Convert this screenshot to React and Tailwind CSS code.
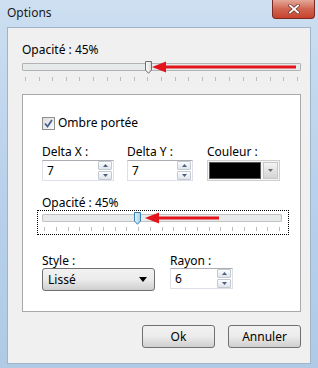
import React from "react";

function Ticks({ count = 21, className = "" }) {
  return (
    <div className={"flex justify-between " + className}>
      {Array.from({ length: count }).map((_, i) => (
        <span key={i} className="w-px h-[4px] bg-[#bcbcbc]" />
      ))}
    </div>
  );
}

function Thumb({ blue }) {
  return (
    <svg width="9" height="13" viewBox="0 0 9 13">
      <defs>
        <linearGradient id={blue ? "tb" : "tg"} x1="0" y1="0" x2="1" y2="0">
          <stop offset="0" stopColor={blue ? "#e3f3fb" : "#ffffff"} />
          <stop offset="1" stopColor={blue ? "#9fd2ee" : "#d9d9d9"} />
        </linearGradient>
      </defs>
      <path
        d="M1.5 0.5 H7.5 V9 L4.5 12.3 L1.5 9 Z"
        fill={`url(#${blue ? "tb" : "tg"})`}
        stroke={blue ? "#3c7fb1" : "#707070"}
        strokeWidth="1"
      />
    </svg>
  );
}

function Arrow({ width }) {
  return (
    <svg width={width} height="12" viewBox={`0 0 ${width} 12`}>
      <path d="M0 6 L14 0.5 L14 11.5 Z" fill="#e3141b" />
      <rect x="13" y="4.5" width={width - 13} height="3" fill="#e3141b" />
    </svg>
  );
}

function SpinBox({ value, w }) {
  return (
    <div
      className="h-[21px] flex items-center bg-white border border-[#dde1e7] border-t-[#abadb3]"
      style={{ width: w }}
    >
      <span className="pl-[4px] flex-1 leading-none">{value}</span>
      <div className="flex flex-col gap-px mr-px">
        <div className="w-[14px] h-[9px] border border-[#c3c9d1] rounded-[1px] bg-gradient-to-b from-[#fbfcfd] to-[#dfe5ec] flex items-center justify-center">
          <svg width="5" height="3" viewBox="0 0 5 3">
            <path d="M0 3 L2.5 0 L5 3 Z" fill="#4e5e7c" />
          </svg>
        </div>
        <div className="w-[14px] h-[9px] border border-[#c3c9d1] rounded-[1px] bg-gradient-to-b from-[#fbfcfd] to-[#dfe5ec] flex items-center justify-center">
          <svg width="5" height="3" viewBox="0 0 5 3">
            <path d="M0 0 L2.5 3 L5 0 Z" fill="#4e5e7c" />
          </svg>
        </div>
      </div>
    </div>
  );
}

function Button({ children }) {
  return (
    <button className="w-[73px] h-[23px] rounded-[3px] border border-[#707070] bg-gradient-to-b from-[#f2f2f2] via-[#ebebeb] to-[#cfcfcf] leading-none">
      {children}
    </button>
  );
}

export default function App() {
  return (
    <div className="w-[318px] h-[368px] overflow-hidden flex flex-col bg-gradient-to-b from-[#cddff1] via-[#b9d1ea] to-[#b0cae6] font-['Noto_Sans',sans-serif] text-[12px] text-black">
      {/* title bar */}
      <div className="h-[27px] shrink-0 flex items-start">
        <div className="pl-[7px] pt-[5px] leading-[16px] text-[#1a1a1a]">Options</div>
        <div className="ml-auto mr-[3px] w-[43px] h-[19px] rounded-b-[4px] border border-t-0 border-[#7b2a22] bg-gradient-to-b from-[#e3a898] via-[#d06552] to-[#c8412c] flex items-center justify-center">
          <svg width="12" height="10" viewBox="0 0 12 10">
            <path
              d="M2 1.5 L10 8.5 M10 1.5 L2 8.5"
              stroke="#7a3a32"
              strokeWidth="3.4"
              strokeLinecap="square"
            />
            <path
              d="M2 1.5 L10 8.5 M10 1.5 L2 8.5"
              stroke="#ffffff"
              strokeWidth="1.8"
              strokeLinecap="square"
            />
          </svg>
        </div>
      </div>

      {/* client */}
      <div className="mx-[7px] mb-[4px] flex-1 bg-[#f0f0f0] border border-[#9fb3c9] pl-[14px] pr-[9px] flex flex-col">
        <div className="mt-[14px] leading-[16px]">Opacité : 45%</div>
        <div className="relative mt-[5px]">
          <div className="h-[8px] rounded-[1px] border border-[#b3b3b3] bg-[#e7eaea]" />
          <div className="absolute left-[122px] top-[-2px]">
            <Thumb />
          </div>
          <div className="absolute left-[130px] top-[-2px]">
            <Arrow width={144} />
          </div>
        </div>
        <Ticks className="mt-[6px] px-[3px]" />

        {/* group box */}
        <div className="mt-[13px] h-[218px] bg-white border border-[#a9a9a9] pl-[19px] flex flex-col">
          <div className="mt-[20px] flex items-center gap-[3px] leading-[16px]">
            <div className="w-[13px] h-[13px] border border-[#8e8f8f] bg-gradient-to-br from-[#dcdcdc] to-[#fbfbfb] flex items-center justify-center">
              <svg width="9" height="9" viewBox="0 0 9 9">
                <path
                  d="M1 4.5 L3.5 7.5 L8 1"
                  fill="none"
                  stroke="#4a5f97"
                  strokeWidth="1.8"
                />
              </svg>
            </div>
            <span>Ombre portée</span>
          </div>

          <div className="mt-[13px] flex">
            <div className="w-[85px]">
              <div className="leading-[16px]">Delta X :</div>
              <SpinBox value="7" w={72} />
            </div>
            <div className="w-[80px]">
              <div className="leading-[16px]">Delta Y :</div>
              <SpinBox value="7" w={66} />
            </div>
            <div>
              <div className="leading-[16px]">Couleur :</div>
              <div className="w-[73px] h-[21px] border border-[#cfcfcf] bg-[#f4f4f4] flex items-center p-px gap-[2px]">
                <div className="flex-1 h-full bg-black border border-[#555]" />
                <div className="w-[15px] h-full border border-[#c7c7c7] bg-gradient-to-b from-[#f3f3f3] to-[#d4d4d4] flex items-center justify-center">
                  <svg width="5" height="3" viewBox="0 0 5 3">
                    <path d="M0 0 L2.5 3 L5 0 Z" fill="#6d6d6d" />
                  </svg>
                </div>
              </div>
            </div>
          </div>

          <div className="mt-[14px] leading-[15px]">Opacité : 45%</div>
          <div className="-ml-[5px] w-[252px] h-[25px] border border-dotted border-black pl-[4px] pr-[6px] pt-[3px]">
            <div className="relative">
              <div className="h-[8px] rounded-[1px] border border-[#c2c2c2] bg-[#e7eaea]" />
              <div className="absolute left-[91px] top-[-2px]">
                <Thumb blue />
              </div>
              <div className="absolute left-[103px] top-[-2px]">
                <Arrow width={74} />
              </div>
            </div>
            <Ticks className="mt-[5px] px-[2px]" />
          </div>

          <div className="mt-[18px] flex">
            <div className="w-[128px]">
              <div className="leading-[15px]">Style :</div>
              <div className="w-[113px] h-[23px] rounded-[3px] border border-[#707070] bg-gradient-to-b from-[#f2f2f2] via-[#ebebeb] to-[#cfcfcf] flex items-center pl-[5px] pr-[7px]">
                <span className="flex-1">Lissé</span>
                <svg width="8" height="5" viewBox="0 0 8 5">
                  <path d="M0 0 L4 5 L8 0 Z" fill="#000" />
                </svg>
              </div>
            </div>
            <div>
              <div className="leading-[15px]">Rayon :</div>
              <SpinBox value="6" w={63} />
            </div>
          </div>
        </div>

        <div className="mt-[13px] flex justify-end gap-[13px]">
          <Button>Ok</Button>
          <Button>Annuler</Button>
        </div>
      </div>
    </div>
  );
}
